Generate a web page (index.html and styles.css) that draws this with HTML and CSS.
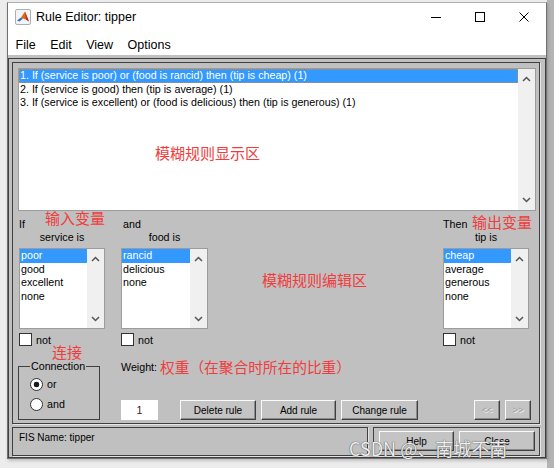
FILE: index.html
```html
<!DOCTYPE html>
<html>
<head>
<meta charset="utf-8">
<title>Rule Editor: tipper</title>
<link rel="stylesheet" href="styles.css">
</head>
<body>
<div class="window">
  <div class="titlebar">
    <svg class="appicon" width="16" height="16" viewBox="0 0 16 16">
      <rect x="0.5" y="0.5" width="15" height="15" rx="1.5" fill="#f2f4f7" stroke="#a8b0bc"/>
      <path d="M2 11.5 L6 8.5 L8 9.5 L4.5 12.5 Z" fill="#3a6fb5"/>
      <path d="M6 8.5 L10 2.5 L14 12.5 L11 10.5 L8 9.5 Z" fill="#e8621a"/>
      <path d="M10 2.5 L11 10.5 L14 12.5 Z" fill="#b8321a"/>
    </svg>
    <span class="title">Rule Editor: tipper</span>
    <div class="winctrls">
      <span class="wc"><svg width="10" height="10" viewBox="0 0 10 10"><line x1="0" y1="5.5" x2="10" y2="5.5" stroke="#000" stroke-width="1"/></svg></span>
      <span class="wc"><svg width="10" height="10" viewBox="0 0 10 10"><rect x="0.5" y="0.5" width="9" height="9" fill="none" stroke="#000" stroke-width="1"/></svg></span>
      <span class="wc"><svg width="10" height="10" viewBox="0 0 10 10"><path d="M0.5 0.5 L9.5 9.5 M9.5 0.5 L0.5 9.5" stroke="#000" stroke-width="1"/></svg></span>
    </div>
  </div>
  <div class="menubar">
    <span>File</span><span>Edit</span><span>View</span><span>Options</span>
  </div>
  <div class="content">
    <div class="frame">
      <div class="panel">
        <div class="listbox rules">
          <div class="items">
            <div class="item sel focus">1. If (service is poor) or (food is rancid) then (tip is cheap) (1)</div>
            <div class="item">2. If (service is good) then (tip is average) (1)</div>
            <div class="item">3. If (service is excellent) or (food is delicious) then (tip is generous) (1)</div>
          </div>
          <div class="scroll">
            <svg width="9" height="6" viewBox="0 0 9 6"><polyline points="1,5 4.5,1.5 8,5" fill="none" stroke="#555" stroke-width="1.5"/></svg>
            <svg width="9" height="6" viewBox="0 0 9 6"><polyline points="1,1 4.5,4.5 8,1" fill="none" stroke="#555" stroke-width="1.5"/></svg>
          </div>
        </div>

        <div class="vars">
          <div class="var">
            <div class="lbl1">If</div>
            <div class="lbl2">service is</div>
            <div class="listbox small">
              <div class="items">
                <div class="item sel">poor</div>
                <div class="item">good</div>
                <div class="item">excellent</div>
                <div class="item">none</div>
              </div>
              <div class="scroll">
                <svg width="9" height="6" viewBox="0 0 9 6"><polyline points="1,5 4.5,1.5 8,5" fill="none" stroke="#555" stroke-width="1.5"/></svg>
                <svg width="9" height="6" viewBox="0 0 9 6"><polyline points="1,1 4.5,4.5 8,1" fill="none" stroke="#555" stroke-width="1.5"/></svg>
              </div>
            </div>
            <div class="not"><span class="check"></span>not</div>
          </div>
          <div class="var food">
            <div class="lbl1 and">and</div>
            <div class="lbl2">food is</div>
            <div class="listbox small">
              <div class="items">
                <div class="item sel">rancid</div>
                <div class="item">delicious</div>
                <div class="item">none</div>
              </div>
              <div class="scroll">
                <svg width="9" height="6" viewBox="0 0 9 6"><polyline points="1,5 4.5,1.5 8,5" fill="none" stroke="#555" stroke-width="1.5"/></svg>
                <svg width="9" height="6" viewBox="0 0 9 6"><polyline points="1,1 4.5,4.5 8,1" fill="none" stroke="#555" stroke-width="1.5"/></svg>
              </div>
            </div>
            <div class="not"><span class="check"></span>not</div>
          </div>
          <div class="var tip">
            <div class="lbl1">Then</div>
            <div class="lbl2">tip is</div>
            <div class="listbox small">
              <div class="items">
                <div class="item sel">cheap</div>
                <div class="item">average</div>
                <div class="item">generous</div>
                <div class="item">none</div>
              </div>
              <div class="scroll">
                <svg width="9" height="6" viewBox="0 0 9 6"><polyline points="1,5 4.5,1.5 8,5" fill="none" stroke="#555" stroke-width="1.5"/></svg>
                <svg width="9" height="6" viewBox="0 0 9 6"><polyline points="1,1 4.5,4.5 8,1" fill="none" stroke="#555" stroke-width="1.5"/></svg>
              </div>
            </div>
            <div class="not"><span class="check"></span>not</div>
          </div>
        </div>

        <div class="bottom">
          <div class="conn-col">
            <div class="note-flow">连接</div>
            <fieldset class="conn">
              <legend>Connection</legend>
              <div class="radio-row first"><span class="radio on"></span>or</div>
              <div class="radio-row"><span class="radio"></span>and</div>
            </fieldset>
          </div>
          <div class="weight-col">
            <div class="weight-row"><span>Weight:</span><span class="note-inline">权重（在聚合时所在的比重）</span></div>
            <div class="btn-row">
              <div class="wbox">1</div>
              <button class="btn b-delete">Delete rule</button>
              <button class="btn b-add">Add rule</button>
              <button class="btn b-change">Change rule</button>
              <button class="btn b-prev dis">&lt;&lt;</button>
              <button class="btn b-next dis">&gt;&gt;</button>
            </div>
          </div>
        </div>

        <span class="note note-display">模糊规则显示区</span>
        <span class="note note-in">输入变量</span>
        <span class="note note-out">输出变量</span>
        <span class="note note-edit">模糊规则编辑区</span>
      </div>
      <div class="status">
        <div class="fis">FIS Name: tipper</div>
        <div class="actions">
          <button class="btn b-help">Help</button>
          <button class="btn b-close">Close</button>
        </div>
      </div>
    </div>
  </div>
  <div class="watermark">CSDN @、南城不南</div>
</div>
</body>
</html>
```
FILE: styles.css
```css
* { box-sizing: border-box; }

html, body {
  margin: 0;
}

body {
  padding: 2px 0 0 7px;
  width: 554px;
  height: 468px;
  overflow: hidden;
  background: linear-gradient(to right, #ececec 0 547px, #b4b4b4 547px);
  font-family: "Liberation Sans", Arial, sans-serif;
  color: #000;
}

.window {
  position: relative;
  width: 540px;
  height: 457px;
  border: 1px solid #707070;
  border-top-color: #b0b0b0;
  background: #fff;
  display: flex;
  flex-direction: column;
  box-shadow: 1px 2px 3px rgba(0,0,0,0.18);
}

.titlebar {
  height: 27px;
  display: flex;
  align-items: center;
  padding-left: 7px;
  background: #fff;
}

.appicon { margin-right: 5px; flex: none; }

.title { font-size: 12.5px; }

.winctrls {
  margin-left: auto;
  display: flex;
  height: 100%;
}

.wc {
  width: 44px;
  display: flex;
  align-items: center;
  justify-content: center;
}

.menubar {
  height: 25px;
  display: flex;
  align-items: center;
  gap: 14.5px;
  padding: 5px 0 0 7.5px;
  font-size: 12.5px;
  background: #fff;
}

.content {
  flex: 1;
  background: #c0c0c0;
  padding-top: 3px;
  display: flex;
}

.frame {
  flex: 1;
  border: 1px solid #404040;
  padding: 3px 5px 1px 3px;
  display: flex;
  flex-direction: column;
}

.panel {
  position: relative;
  height: 362px;
  border: 1px solid #404040;
  box-shadow: 1px 1px 0 #e4e4e4;
  padding: 5px 3px 0 5px;
}

/* listboxes */
.listbox {
  display: flex;
  background: #fff;
  border: 1px solid #9c9c9c;
}

.listbox .items {
  flex: 1;
  min-width: 0;
  overflow: hidden;
}

.item {
  height: 13.5px;
  line-height: 13.5px;
  padding-left: 1px;
  font-size: 10.7px;
  white-space: nowrap;
}

.item.sel {
  background: #3399ff;
  color: #fff;
}

.item.focus {
  outline: 1px dotted #c88a45;
  outline-offset: -1px;
}

.scroll {
  width: 17px;
  flex: none;
  background: #f0f0f0;
  display: flex;
  flex-direction: column;
  justify-content: space-between;
  align-items: center;
  padding: 7px 0 7px;
}

.rules { height: 143px; }

.small { height: 81px; margin-top: 4px; }
.small .scroll { padding: 7px 0 6px; }

/* variable columns */
.vars {
  display: flex;
  padding: 7px 7px 0 1px;
}

.var {
  width: 86px;
  display: flex;
  flex-direction: column;
}

.var.food { width: 87px; margin-left: 16px; }
.var.tip { margin-left: auto; }

.lbl1, .lbl2 {
  height: 13px;
  line-height: 13px;
  font-size: 10.7px;
  white-space: nowrap;
}

.lbl1.and { padding-left: 2px; }
.lbl2 { text-align: center; }

.not {
  margin-top: 4px;
  height: 13px;
  display: flex;
  align-items: center;
  gap: 4px;
  font-size: 10.7px;
}

.check {
  width: 13px;
  height: 13px;
  background: #fff;
  border: 1px solid #333;
  flex: none;
}

/* bottom area */
.bottom {
  display: flex;
}

.conn-col {
  width: 82px;
  display: flex;
  flex-direction: column;
}

.note-flow {
  height: 14px;
  line-height: 12px;
  margin-left: 34px;
  font-family: "Noto Sans CJK SC", sans-serif;
  font-size: 15px;
  color: #f03c3c;
  white-space: nowrap;
}

.conn {
  margin: 0;
  min-width: 0;
  height: 60px;
  padding: 0 0 0 11px;
  border: 1px solid #404040;
}

.conn legend {
  padding: 0 1px;
  font-size: 10.7px;
  line-height: 13px;
}

.radio-row {
  height: 13px;
  display: flex;
  align-items: center;
  gap: 4px;
  font-size: 10.7px;
  margin-top: 7px;
}

.radio-row.first { margin-top: 4.5px; }

.radio {
  width: 13px;
  height: 13px;
  flex: none;
  border-radius: 50%;
  border: 1px solid #333;
  background: #fff;
}

.radio.on {
  background: radial-gradient(circle, #1a1a1a 0 2.6px, #fff 3.1px);
}

.weight-col {
  flex: 1;
  margin-left: 21px;
  padding-right: 5px;
  display: flex;
  flex-direction: column;
}

.weight-row {
  height: 17px;
  margin-top: 12px;
  display: flex;
  align-items: center;
  font-size: 10.7px;
  white-space: nowrap;
}

.note-inline {
  margin-left: 3px;
  font-family: "Noto Sans CJK SC", sans-serif;
  font-size: 14.7px;
  color: #f03c3c;
}

.btn-row {
  margin-top: 25px;
  height: 20px;
  display: flex;
}

.wbox {
  width: 37px;
  height: 20px;
  background: #fff;
  text-align: center;
  line-height: 20px;
  font-size: 10.7px;
  color: #4a1020;
}

.btn {
  height: 20px;
  padding: 0;
  margin: 0;
  background: #c4c4c4;
  border: 1px solid;
  border-color: #fafafa #404040 #404040 #fafafa;
  box-shadow: inset -1px -1px 0 #8a8a8a;
  font-family: "Liberation Sans", Arial, sans-serif;
  font-size: 10px;
  color: #000;
}

.b-delete { width: 76px; margin-left: 22px; }
.b-add { width: 75px; margin-left: 5px; }
.b-change { width: 77px; margin-left: 5px; }
.b-prev { width: 26px; margin-left: auto; }
.b-next { width: 26px; margin-left: 5px; }

.btn.dis {
  color: #a0a0a0;
  text-shadow: 1px 1px 0 #f4f4f4;
  font-size: 9px;
}

/* status bar */
.status {
  height: 29px;
  margin-top: 3px;
  display: flex;
}

.fis {
  width: 356px;
  border: 1px solid #404040;
  box-shadow: 1px 1px 0 #e4e4e4;
  padding: 4px 0 0 6px;
  font-size: 10px;
  line-height: 12px;
}

.actions {
  flex: 1;
  margin-left: 5px;
  border: 1px solid #404040;
  box-shadow: 1px 1px 0 #e4e4e4;
  padding: 3px 0 0 5px;
  display: flex;
  align-items: flex-start;
  gap: 5px;
}

.b-help { width: 75px; }
.b-close { width: 76px; }

/* annotations drawn over the screenshot */
.note {
  position: absolute;
  font-family: "Noto Sans CJK SC", sans-serif;
  font-size: 15px;
  line-height: 16px;
  color: #f03c3c;
  white-space: nowrap;
}

.note-display { left: 142px; top: 82px; }
.note-in { left: 32px; top: 147px; }
.note-out { left: 459px; top: 151px; }
.note-edit { left: 249px; top: 209px; }

.watermark {
  position: absolute;
  left: 341px;
  top: 435px;
  font-family: "Noto Sans CJK SC", sans-serif;
  font-size: 18px;
  line-height: 20px;
  color: rgba(255,255,255,0.92);
  text-shadow: 0 0 1px #555, 0 0 1px #555;
  white-space: nowrap;
}
```
